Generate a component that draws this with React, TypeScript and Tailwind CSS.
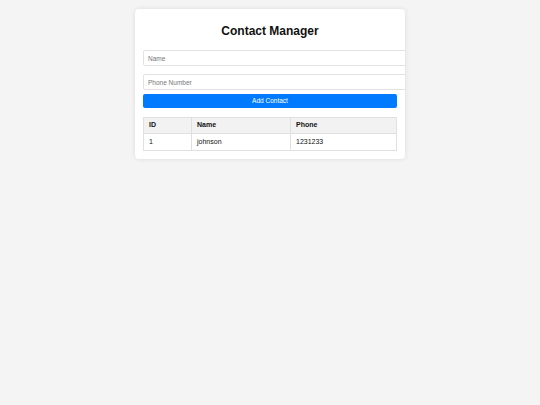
export default function App() {
  const contacts = [{ id: 1, name: "johnson", phone: "1231233" }];

  return (
    <div className="min-h-[405px] bg-[#f4f4f4] pt-[9px] font-['Liberation_Sans',Arial,sans-serif]">
      <div className="mx-auto w-[270px] overflow-hidden rounded-[4px] bg-white px-[8px] pt-[15px] pb-[8px] shadow-[0_0_5px_rgba(0,0,0,0.1)]">
        <h1 className="mb-[12px] text-center text-[12px] leading-[14px] font-bold text-[#111]">Contact Manager</h1>

        <input
          type="text"
          placeholder="Name"
          className="mb-[8px] block h-[16px] w-[268px] rounded-[2px] border border-[#e2e2e2] px-[4px] text-[6.5px] placeholder:text-[#777] focus:outline-none"
        />
        <input
          type="text"
          placeholder="Phone Number"
          className="mb-[4px] block h-[16px] w-[268px] rounded-[2px] border border-[#e2e2e2] px-[4px] text-[6.5px] placeholder:text-[#777] focus:outline-none"
        />
        <button className="block h-[14px] w-full rounded-[2px] bg-[#007bff] text-[6.5px] text-white">Add Contact</button>

        {/* Table */}
        <table className="mt-[9px] w-full border-collapse text-left text-[7px] text-[#111]">
          <thead>
            <tr className="bg-[#f2f2f2]">
              <th className="h-[16px] w-[48px] border border-[#e0e0e0] px-[5px] font-bold">ID</th>
              <th className="h-[16px] w-[99px] border border-[#e0e0e0] px-[5px] font-bold">Name</th>
              <th className="h-[16px] border border-[#e0e0e0] px-[5px] font-bold">Phone</th>
            </tr>
          </thead>
          <tbody>
            {contacts.map((c) => (
              <tr key={c.id}>
                <td className="h-[17px] border border-[#e0e0e0] px-[5px]">{c.id}</td>
                <td className="h-[17px] border border-[#e0e0e0] px-[5px]">{c.name}</td>
                <td className="h-[17px] border border-[#e0e0e0] px-[5px]">{c.phone}</td>
              </tr>
            ))}
          </tbody>
        </table>
      </div>
    </div>
  );
}
